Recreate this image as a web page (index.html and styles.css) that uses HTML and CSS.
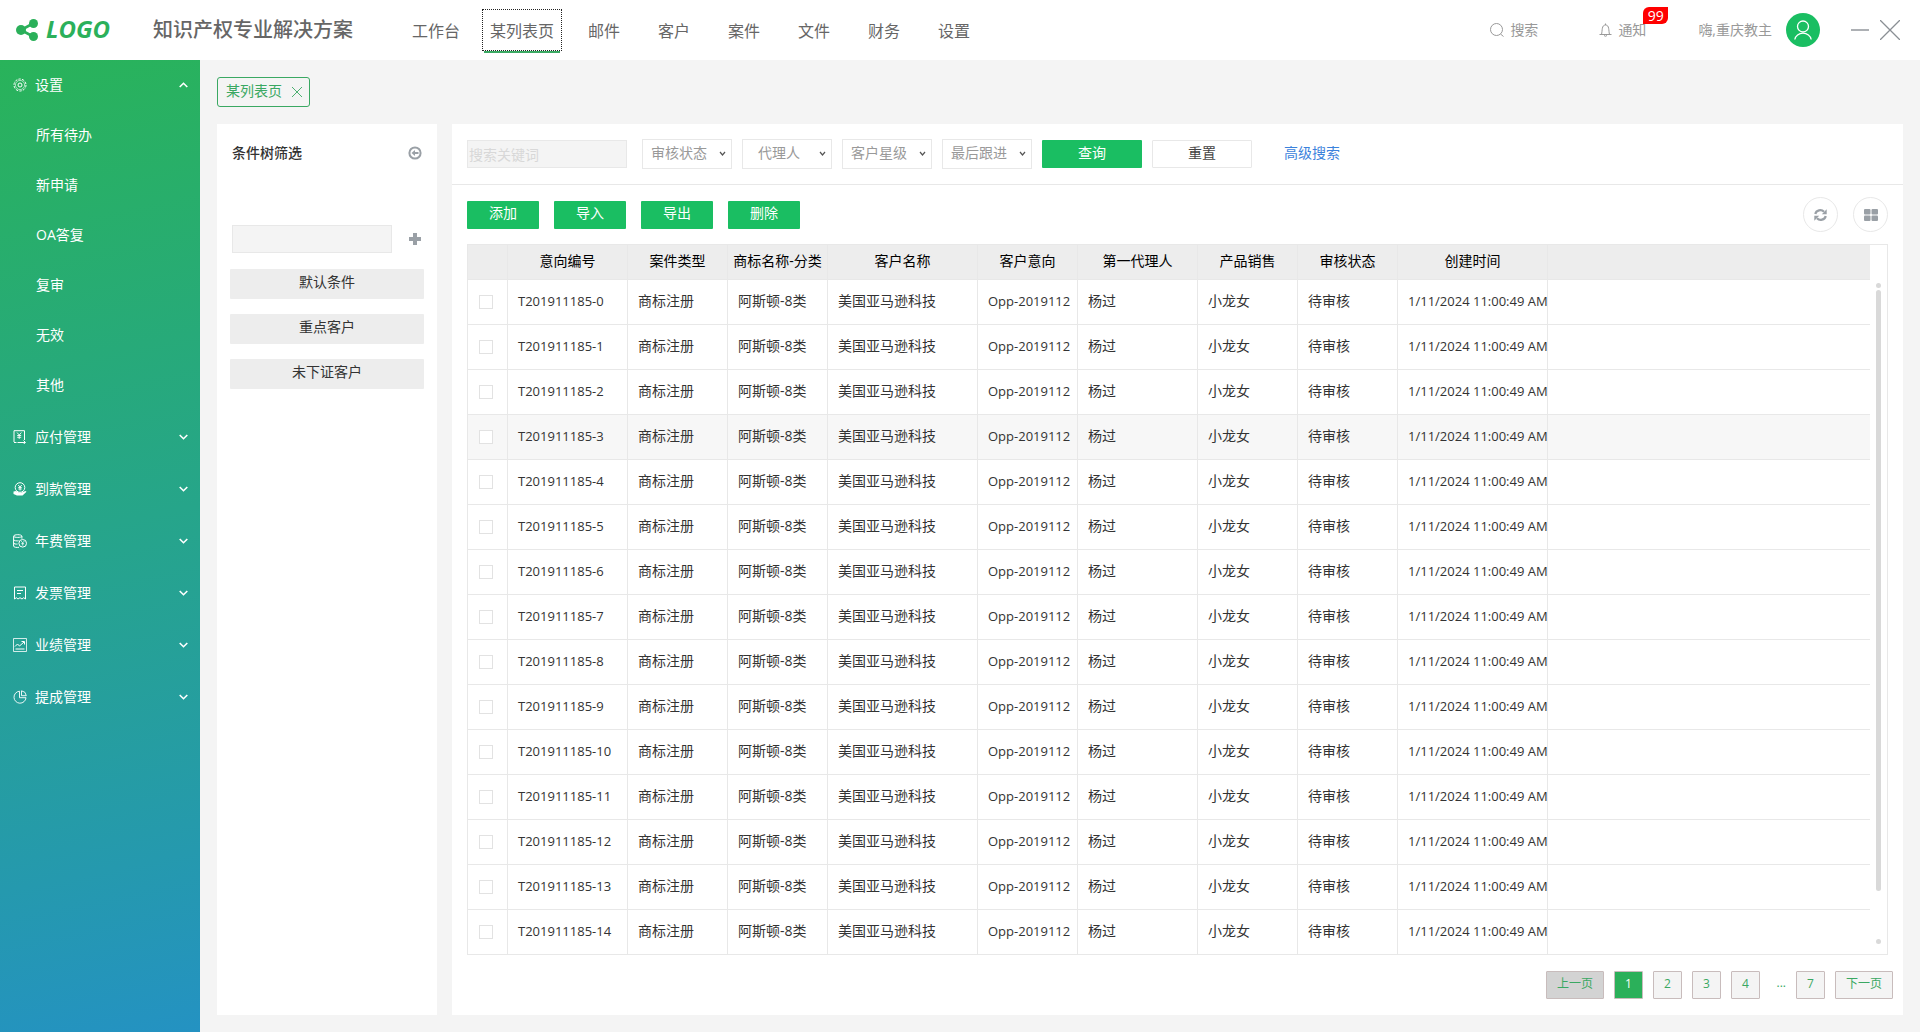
FILE: index.html
```html
<!DOCTYPE html>
<html lang="zh-CN">
<head>
<meta charset="utf-8">
<meta name="viewport" content="width=device-width, initial-scale=1">
<title>知识产权专业解决方案</title>
<link rel="stylesheet" href="styles.css">
</head>
<body>
<header class="topbar">
  <a class="logo" href="#">
    <svg width="22" height="22" viewBox="0 0 22 22" aria-hidden="true"><g fill="currentColor"><circle cx="5" cy="11" r="5"/><circle cx="17.500" cy="4.500" r="4.500"/><circle cx="17.500" cy="17.500" r="4.500"/></g><path d="M17 4.500 5 11l12 6.500" fill="none" stroke="currentColor" stroke-width="2.600"/></svg>
    <span class="logo-text">LOGO</span>
  </a>
  <h1 class="product">知识产权专业解决方案</h1>
  <nav class="mainnav">
    <ul>
      <li><a href="#">工作台</a></li>
      <li><a href="#" class="current" aria-current="page">某列表页</a></li>
      <li><a href="#">邮件</a></li>
      <li><a href="#">客户</a></li>
      <li><a href="#">案件</a></li>
      <li><a href="#">文件</a></li>
      <li><a href="#">财务</a></li>
      <li><a href="#">设置</a></li>
    </ul>
  </nav>
  <div class="tools">
    <button type="button" class="tool">
      <svg width="14" height="14" viewBox="0 0 14 14" fill="none" stroke="currentColor"><circle cx="6.500" cy="6.500" r="6"/><path d="m10.500 11 3 2.500"/></svg>
      搜索
    </button>
    <button type="button" class="tool notify">
      <svg width="13" height="14" viewBox="0 0 13 14" fill="none" stroke="currentColor"><path d="M.5 11.500h12M2.500 11.500c1-4 0-9.500 4-9.500s3 5.500 4 9.500M6.500 2V.5M5 12.500q1.500 1.500 3 0"/></svg>
      通知
      <span class="badge">99</span>
    </button>
    <span class="hello">嗨,重庆教主</span>
    <button type="button" class="avatar" aria-label="用户">
      <svg width="18" height="20" viewBox="0 0 18 20" fill="none" stroke="currentColor" stroke-width="1.300"><circle cx="9" cy="6.500" r="5.500"/><path d="M.8 19.500a8.300 7.500 0 0 1 16.400 0"/></svg>
    </button>
    <button type="button" class="winbtn" aria-label="最小化"><svg width="18" height="20" viewBox="0 0 18 20" fill="none" stroke="currentColor" stroke-width="1.400"><path d="M0 10h18"/></svg></button>
    <button type="button" class="winbtn close" aria-label="关闭"><svg width="20" height="20" viewBox="0 0 20 20" fill="none" stroke="currentColor" stroke-width="1.300"><path d="m0 0 20 20M20 0 0 20"/></svg></button>
  </div>
</header>

<div class="body">
  <aside class="sidebar">
    <button type="button" class="group" aria-expanded="true">
      <svg class="gicon" viewBox="0 0 14 14" fill="none" stroke="currentColor"><circle cx="7" cy="7" r="6" stroke-dasharray="2.500 1.200"/><circle cx="7" cy="7" r="4.600" stroke-width=".6"/><circle cx="7" cy="7" r="2"/></svg>
      <span>设置</span>
      <svg class="chev" viewBox="0 0 9 6"><path d="m.7 5 3.800-3.700L8.300 5"/></svg>
    </button>
    <ul class="sub">
      <li><a href="#">所有待办</a></li>
      <li><a href="#">新申请</a></li>
      <li><a href="#">OA答复</a></li>
      <li><a href="#">复审</a></li>
      <li><a href="#">无效</a></li>
      <li><a href="#">其他</a></li>
    </ul>
    <button type="button" class="group" aria-expanded="false">
      <svg class="gicon" viewBox="0 0 14 14" fill="none" stroke="currentColor"><path d="M1 12V.7h10.500V10M1 12.500h2.500M4.500 12.500h7.500M10.500 10.500l2 2-2 1.500"/><path d="m4 2.500 2.200 2.500 2.200-2.500M6.200 5v4M4.200 5.500h4M4.200 7.300h4" stroke-width=".9"/></svg>
      <span>应付管理</span>
      <svg class="chev" viewBox="0 0 9 6"><path d="M.7 1l3.800 3.700L8.300 1"/></svg>
    </button>
    <button type="button" class="group" aria-expanded="false">
      <svg class="gicon" viewBox="0 0 14 14" fill="none" stroke="currentColor"><circle cx="7" cy="5.500" r="4.800"/><path d="m5.200 3 1.800 2 1.800-2M7 5v3.500M5.300 5.500h3.400M5.300 7h3.400" stroke-width=".9"/><path d="M.5 9.500 3 9l3 1.500h2.500l4-1.500 1 .8L9.500 13.500H4L.5 12z" fill="currentColor" stroke="none"/></svg>
      <span>到款管理</span>
      <svg class="chev" viewBox="0 0 9 6"><path d="M.7 1l3.800 3.700L8.300 1"/></svg>
    </button>
    <button type="button" class="group" aria-expanded="false">
      <svg class="gicon" viewBox="0 0 14 14" fill="none" stroke="currentColor"><path d="M.6 2.200c0-2 8.300-2 8.300 0v2.500M.6 2.200V12c0 1.500 3.400 1.600 5.400 1.300M.6 2.200c0 1.600 8.300 1.600 8.300 0M.6 5.500c0 1.300 3.400 1.600 5 1.300M.6 8.700c0 1.300 2.400 1.600 4 1.300"/><circle cx="9.700" cy="9.300" r="3.800"/><path d="m8.200 7.200 1.500 1.600 1.500-1.600M9.700 9v2.600M8.300 9.700h2.800" stroke-width=".8"/></svg>
      <span>年费管理</span>
      <svg class="chev" viewBox="0 0 9 6"><path d="M.7 1l3.800 3.700L8.300 1"/></svg>
    </button>
    <button type="button" class="group" aria-expanded="false">
      <svg class="gicon" viewBox="0 0 14 14" fill="none" stroke="currentColor"><path d="M1.500 13V1h11v12l-1.800-1.300L9 13l-2-1.300L5 13l-1.700-1.300zM4 4.500h6M4 7.500h4"/></svg>
      <span>发票管理</span>
      <svg class="chev" viewBox="0 0 9 6"><path d="M.7 1l3.800 3.700L8.300 1"/></svg>
    </button>
    <button type="button" class="group" aria-expanded="false">
      <svg class="gicon" viewBox="0 0 14 14" fill="none" stroke="currentColor"><path d="M.5.5h13v13H.5z" stroke-width=".8"/><path d="M2 8.500 4.500 6l2 2L11 4M8.500 3.500h3v3M2.500 11h9"/></svg>
      <span>业绩管理</span>
      <svg class="chev" viewBox="0 0 9 6"><path d="M.7 1l3.800 3.700L8.300 1"/></svg>
    </button>
    <button type="button" class="group" aria-expanded="false">
      <svg class="gicon" viewBox="0 0 14 14" fill="none" stroke="currentColor" stroke-width=".9"><path d="M6.500 1.200a6 6 0 1 0 6.500 6.500H6.500z"/><path d="M8.500.8a5.500 5.500 0 0 1 4.800 4.900H8.500z"/></svg>
      <span>提成管理</span>
      <svg class="chev" viewBox="0 0 9 6"><path d="M.7 1l3.800 3.700L8.300 1"/></svg>
    </button>
  </aside>

  <main class="main">
    <div class="tabs">
      <div class="tab"><a href="#">某列表页</a>
        <button type="button" aria-label="关闭标签"><svg width="10" height="10" viewBox="0 0 10 10" fill="none" stroke="currentColor" stroke-width=".9"><path d="m0 0 10 10M10 0 0 10"/></svg></button>
      </div>
    </div>
    <div class="panels">
      <section class="panel tree">
        <div class="tree-head">
          <h2>条件树筛选</h2>
          <button type="button" class="iconbtn" aria-label="收起"><svg width="14" height="14" viewBox="0 0 14 14" fill="none" stroke="currentColor"><circle cx="7" cy="7" r="5.600" stroke-width="2"/><path d="M10.500 7H5.500" stroke-width="2"/><path d="M7 4v6L3.500 7z" fill="currentColor" stroke="none"/></svg></button>
        </div>
        <div class="tree-add">
          <input type="text" class="field" aria-label="条件名称">
          <button type="button" class="iconbtn" aria-label="新增条件"><svg width="12" height="12" viewBox="0 0 12 12" fill="currentColor"><path d="M4 0h4v4h4v4H8v4H4V8H0V4h4z"/></svg></button>
        </div>
        <div class="conds">
          <button type="button">默认条件</button>
          <button type="button">重点客户</button>
          <button type="button">未下证客户</button>
        </div>
      </section>

      <section class="panel list">
        <form class="filters">
          <input type="text" class="field" placeholder="搜索关键词" aria-label="搜索关键词">
          <span class="select"><select aria-label="审核状态"><option>审核状态</option></select><svg viewBox="0 0 9 6"><path d="M2 1l2.500 3L7 1"/></svg></span>
          <span class="select"><select aria-label="代理人"><option>代理人</option></select><svg viewBox="0 0 9 6"><path d="M2 1l2.500 3L7 1"/></svg></span>
          <span class="select"><select aria-label="客户星级"><option>客户星级</option></select><svg viewBox="0 0 9 6"><path d="M2 1l2.500 3L7 1"/></svg></span>
          <span class="select"><select aria-label="最后跟进"><option>最后跟进</option></select><svg viewBox="0 0 9 6"><path d="M2 1l2.500 3L7 1"/></svg></span>
          <button type="button" class="btn wide">查询</button>
          <button type="reset" class="btn wide plain">重置</button>
          <a class="advanced" href="#">高级搜索</a>
        </form>
        <div class="actions">
          <button type="button" class="btn">添加</button>
          <button type="button" class="btn">导入</button>
          <button type="button" class="btn">导出</button>
          <button type="button" class="btn">删除</button>
          <div class="views">
            <button type="button" class="round" aria-label="刷新"><svg width="13" height="12" viewBox="0 0 13 12"><path d="M1.300 5A5 4.700 0 0 1 10 2.800M11.700 7A5 4.700 0 0 1 3 9.200" fill="none" stroke="currentColor" stroke-width="2.200"/><path d="M12.700.3v4.900H7.800zM.3 11.700V6.800h4.900z" fill="currentColor"/></svg></button>
            <button type="button" class="round" aria-label="网格"><svg width="14" height="12" viewBox="0 0 14 12" fill="currentColor"><rect width="6.500" height="5.500" rx="1"/><rect x="7.500" width="6.500" height="5.500" rx="1"/><rect y="6.500" width="6.500" height="5.500" rx="1"/><rect x="7.500" y="6.500" width="6.500" height="5.500" rx="1"/></svg></button>
          </div>
        </div>
        <div class="grid">
          <table>
            <colgroup><col class="w40"><col class="w120"><col class="w100"><col class="w100"><col class="w150"><col class="w100"><col class="w120"><col class="w100"><col class="w100"><col class="w150"><col></colgroup>
            <thead>
              <tr><th></th><th>意向编号</th><th>案件类型</th><th>商标名称-分类</th><th>客户名称</th><th>客户意向</th><th>第一代理人</th><th>产品销售</th><th>审核状态</th><th>创建时间</th><th></th></tr>
            </thead>
            <tbody id="rows"></tbody>
          </table>
          <div class="scroll" aria-hidden="true"><i class="dot"></i><i class="thumb"></i><i class="dot end"></i></div>
        </div>
        <nav class="pager" aria-label="分页">
          <button type="button" class="step" disabled>上一页</button>
          <button type="button" class="on" aria-current="page">1</button>
          <button type="button">2</button>
          <button type="button">3</button>
          <button type="button">4</button>
          <span>...</span>
          <button type="button">7</button>
          <button type="button" class="step">下一页</button>
        </nav>
      </section>
    </div>
  </main>
</div>
<script src="app.js"></script>
</body>
</html>
```
FILE: styles.css
```css
* { box-sizing: border-box; }

body {
  margin: 0;
  min-height: 100vh;
  display: flex;
  flex-direction: column;
  background: #f4f4f4;
  color: #333;
  font: 14px/20px "Open Sans", "Noto Sans CJK SC", sans-serif;
}

h1, h2, ul { margin: 0; padding: 0; font-weight: 400; }
ul { list-style: none; }
a { color: inherit; text-decoration: none; }
svg { display: block; flex: none; }
button, input, select { font: inherit; color: inherit; margin: 0; }
button { padding: 0; border: 0; background: none; cursor: pointer; }

/* top bar */
.topbar {
  display: flex;
  align-items: center;
  height: 60px;
  padding: 0 20px 0 16px;
  background: #fff;
  color: #666;
}
.logo {
  display: flex;
  align-items: center;
  gap: 8px;
  width: 137px;
  color: #2bb05a;
}
.logo-text {
  padding-bottom: 2px;
  font-size: 24px;
  line-height: 28px;
  font-weight: 700;
  font-style: italic;
}
.product {
  width: 244px;
  font-size: 20px;
  line-height: 30px;
  font-weight: 500;
  white-space: nowrap;
}
.mainnav ul { display: flex; }
.mainnav li {
  display: flex;
  justify-content: center;
  min-width: 70px;
  padding: 0 7px;
}
.mainnav a {
  height: 42px;
  padding: 0 8px;
  font-size: 16px;
  line-height: 44px;
  white-space: nowrap;
}
.mainnav .current {
  padding: 0 7px;
  line-height: 42px;
  border: 1px dotted #222;
  box-shadow: 0 4px 0 -2px #3aa862;
}
.tools {
  display: flex;
  align-items: center;
  margin-left: auto;
  color: #999;
}
.tool { display: flex; align-items: center; gap: 6px; white-space: nowrap; }
.notify { position: relative; margin-left: 61px; }
.badge {
  position: absolute;
  left: 44px;
  top: -13px;
  width: 25px;
  height: 17px;
  border-radius: 6px 0;
  background: #f00;
  color: #fff;
  line-height: 17px;
}
.hello { margin-left: 52px; white-space: nowrap; }
.avatar {
  display: grid;
  place-items: center;
  width: 34px;
  height: 34px;
  margin-left: 14px;
  border-radius: 50%;
  background: #1abe62;
  color: #fff;
}
.winbtn { margin-left: 31px; color: #8a8f94; }
.winbtn.close { margin-left: 11px; }

/* side menu */
.body { flex: 1; display: flex; }
.sidebar {
  display: flex;
  flex-direction: column;
  gap: 2px;
  flex: none;
  width: 200px;
  background: linear-gradient(168deg, #29b35a, #26a58a 48%, #2599ae 82%, #2492c2);
  color: #fff;
}
.group {
  display: flex;
  align-items: center;
  gap: 8px;
  height: 50px;
  padding: 0 12px 0 13px;
  text-align: left;
}
.group span { flex: 1; }
.gicon { width: 14px; height: 14px; }
.chev { width: 9px; height: 6px; fill: none; stroke: currentColor; stroke-width: 1.6; }
.sub a { display: block; padding-left: 36px; line-height: 50px; }
.sub { margin-top: -2px; }

/* work area */
.main {
  flex: 1;
  min-width: 0;
  display: flex;
  flex-direction: column;
  gap: 17px;
  padding: 17px;
}
.tabs { display: flex; }
.tab {
  display: flex;
  align-items: center;
  gap: 10px;
  height: 30px;
  padding: 0 7px 0 8px;
  border: 1px solid #3aa862;
  border-radius: 3px;
  color: #3aa862;
}
.tab a { padding-bottom: 2px; }
.panels { flex: 1; display: flex; gap: 15px; }
.panel { background: #fff; }
.iconbtn { display: grid; place-items: center; width: 14px; color: #9aa0a6; }
.field {
  width: 160px;
  height: 28px;
  padding: 0 1px;
  border: 1px solid #e8e8e8;
  background: #f4f4f4;
}
.field::placeholder { color: #d8d8d8; opacity: 1; }

.tree { flex: none; width: 220px; padding: 18px 13px; }
.tree-head, .tree-add {
  display: flex;
  align-items: center;
  justify-content: space-between;
  padding: 0 2px;
}
.tree-head { height: 22px; margin-bottom: 61px; }
.tree-head h2 { font-size: 14px; line-height: 20px; font-weight: 500; }
.conds { display: grid; gap: 15px; margin-top: 16px; }
.conds button { height: 30px; padding-bottom: 4px; border-radius: 1px; background: #ededed; }

.list { flex: 1; min-width: 0; }
.filters {
  display: flex;
  align-items: center;
  gap: 10px;
  height: 61px;
  padding: 0 15px;
  border-bottom: 1px solid #e8e8e8;
}
.filters .field { margin-right: 5px; }
.select { display: grid; align-items: center; width: 90px; height: 30px; }
.select select {
  grid-area: 1 / 1;
  width: 100%;
  height: 30px;
  padding: 0 16px 2px 0;
  border: 1px solid #e8e8e8;
  border-radius: 0;
  background: #fff;
  color: #999;
  appearance: none;
  text-align: center;
}
.select svg {
  grid-area: 1 / 1;
  justify-self: end;
  width: 9px;
  height: 6px;
  margin-right: 5px;
  fill: none;
  stroke: #555;
  stroke-width: 1.2;
  pointer-events: none;
}
.btn {
  width: 72px;
  height: 28px;
  padding-bottom: 3px;
  border-radius: 1px;
  background: #1abe62;
  color: #fff;
}
.btn.wide { width: 100px; }
.btn.plain { border: 1px solid #e8e8e8; background: #fff; color: #444; }
.advanced { margin-left: 22px; padding-bottom: 2px; color: #3b82dc; }

.actions { display: flex; align-items: center; gap: 15px; padding: 12px 15px; }
.views { display: flex; gap: 15px; margin-left: auto; }
.round {
  display: grid;
  place-items: center;
  width: 35px;
  height: 35px;
  border: 1px solid #e8e8e8;
  border-radius: 50%;
  color: #9aa0a6;
}

/* data grid */
.grid { display: flex; margin: 0 15px; border: 1px solid #e8e8e8; }
table { flex: 1; min-width: 0; width: 100%; table-layout: fixed; border-spacing: 0; }
.w40 { width: 40px; }
.w100 { width: 100px; }
.w120 { width: 120px; }
.w150 { width: 150px; }
th, td {
  padding: 0;
  border: solid #e8e8e8;
  border-width: 0 1px 1px 0;
  overflow: hidden;
  white-space: nowrap;
}
th { height: 35px; padding-bottom: 3px; background: #ededed; color: #000; font-weight: 400; }
td { height: 45px; padding: 0 0 3px 10px; text-align: left; }
th:last-child, td:last-child { border-right: 0; }
tbody tr:last-child td { height: 44px; border-bottom: 0; }
tbody tr.hover { background: #f7f7f7; }
.num { font-size: 13px; }
td.pick { padding: 0; }
td.pick input {
  display: block;
  width: 14px;
  height: 14px;
  margin: 0 0 0 11px;
  border: 1px solid #e2e2e2;
  background: #fff;
  appearance: none;
}
.scroll {
  display: flex;
  flex-direction: column;
  align-items: center;
  flex: none;
  width: 17px;
  padding: 38px 0 10px;
}
.dot, .thumb { width: 5px; border-radius: 3px; background: #d9d9d9; }
.dot { height: 5px; }
.thumb { flex: 0 1 601px; margin: 2px 0 auto; }

.pager {
  display: flex;
  justify-content: flex-end;
  gap: 10px;
  margin: 16px 10px;
  color: #3aa862;
  font-size: 12px;
}
.pager button {
  width: 29px;
  height: 28px;
  padding-bottom: 2px;
  border: 1px solid #c8bcbc;
  border-radius: 1px;
  background: #f4f4f4;
}
.pager .step { width: 58px; }
.pager button:disabled { background: #d3d3d3; }
.pager .on { background: #2bb05a; color: #fff; }
.pager span { width: 16px; text-align: right; line-height: 24px; }
```
FILE: app.js
```js
const tbody = document.getElementById('rows');
for (let i = 0; i < 15; i++) {
  const tr = document.createElement('tr');
  if (i === 3) tr.className = 'hover';
  tr.innerHTML = `
    <td class="pick"><input type="checkbox" aria-label="选择 T201911185-${i}"></td>
    <td class="num">T201911185-${i}</td>
    <td>商标注册</td>
    <td>阿斯顿-8类</td>
    <td>美国亚马逊科技</td>
    <td class="num">Opp-2019112</td>
    <td>杨过</td>
    <td>小龙女</td>
    <td>待审核</td>
    <td class="num">1/11/2024 11:00:49 AM</td>
    <td></td>`;
  tbody.append(tr);
}
```
